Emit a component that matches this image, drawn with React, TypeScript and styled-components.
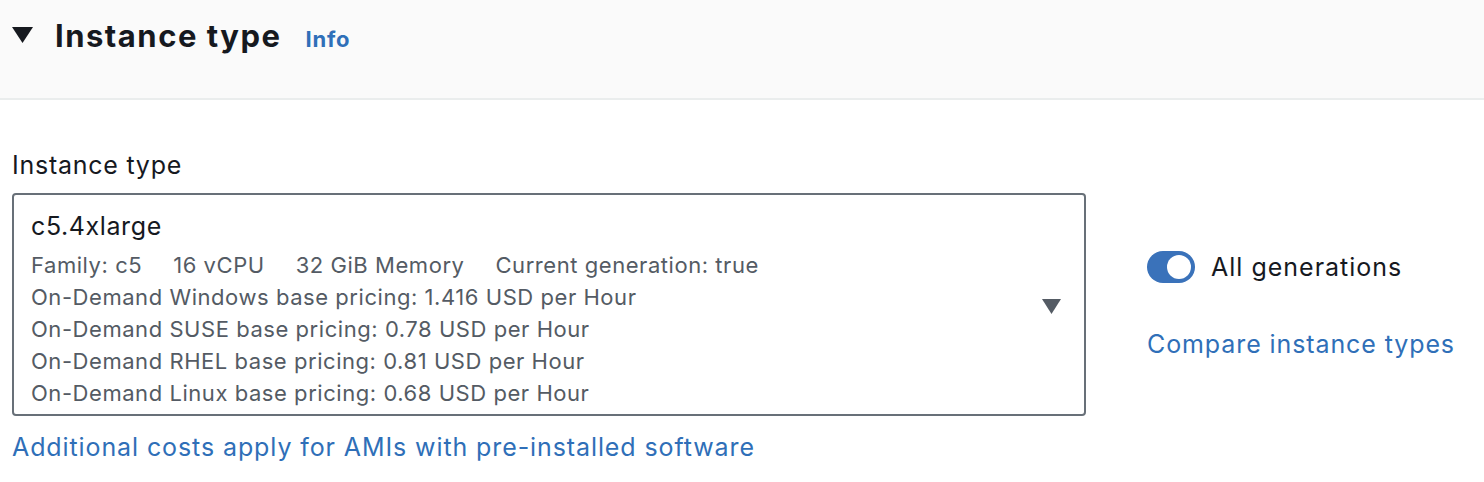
import styled, { createGlobalStyle } from "styled-components";

const GlobalStyle = createGlobalStyle`
  html, body {
    margin: 0;
    padding: 0;
    background: #ffffff;
  }
  body {
    font-family: Inter, "Open Sans", Arial, sans-serif;
    color: #16191f;
  }
`;

const Panel = styled.section`
  width: 1484px;
  height: 482px;
  overflow: hidden;
`;

const Header = styled.header`
  height: 100px;
  box-sizing: border-box;
  background: #fafafa;
  border-bottom: 2px solid #eaeded;
  display: flex;
  align-items: flex-start;
  padding: 13px 12px 0;
  gap: 22px;
`;

const Caret = styled.svg`
  flex: none;
  margin-top: 14px;
`;

const Title = styled.h2`
  margin: 0;
  font-size: 31px;
  font-weight: 700;
  line-height: 46px;
  letter-spacing: 1.5px;
  display: flex;
  align-items: baseline;
  gap: 24px;
`;

const InfoLink = styled.a`
  font-size: 22px;
  font-weight: 700;
  letter-spacing: 0.8px;
  color: #2f6fb8;
  text-decoration: none;
`;

const Body = styled.div`
  padding: 44px 12px 0;
  display: flex;
  align-items: flex-start;
  gap: 61px;
`;

const Field = styled.div`
  display: flex;
  flex-direction: column;
`;

const Label = styled.label`
  font-size: 25px;
  line-height: 38px;
  letter-spacing: 0.75px;
  margin-top: 2px;
  margin-bottom: 9px;
`;

const Select = styled.div`
  width: 1074px;
  height: 223px;
  box-sizing: border-box;
  border: 2px solid #687078;
  border-radius: 4px;
  padding: 12px 17px 0;
  display: flex;
  align-items: center;
`;

const Option = styled.div`
  flex: 1;
  align-self: flex-start;
`;

const OptionName = styled.div`
  font-size: 25px;
  line-height: 38px;
  letter-spacing: 0.6px;
  color: #16191f;
`;

const DetailList = styled.div`
  margin-top: 4px;
`;

const Detail = styled.div`
  display: flex;
  gap: 31px;
  font-size: 22px;
  line-height: 32px;
  letter-spacing: 0.55px;
  color: #545b64;
`;

const SelectArrow = styled.svg`
  flex: none;
  margin-right: 6px;
  margin-top: -8px;
`;

const Link = styled.a`
  font-size: 25px;
  line-height: 36px;
  letter-spacing: 0.9px;
  color: #2f6fb8;
  text-decoration: none;
  margin-top: 13px;
`;

const Side = styled.div`
  padding-top: 107px;
  display: flex;
  flex-direction: column;
  gap: 30px;
`;

const ToggleRow = styled.label`
  display: flex;
  align-items: center;
  gap: 16px;
  font-size: 25px;
  letter-spacing: 1px;
  color: #16191f;
`;

const Track = styled.span<{ $on: boolean }>`
  width: 48px;
  height: 32px;
  border-radius: 16px;
  background: ${(p) => (p.$on ? "#3a72ba" : "#aab7b8")};
  display: flex;
  align-items: center;
  justify-content: ${(p) => (p.$on ? "flex-end" : "flex-start")};
  padding: 0 4px;
  box-sizing: border-box;
`;

const Knob = styled.span`
  width: 24px;
  height: 24px;
  border-radius: 50%;
  background: #ffffff;
`;

const details = [
  "On-Demand Windows base pricing: 1.416 USD per Hour",
  "On-Demand SUSE base pricing: 0.78 USD per Hour",
  "On-Demand RHEL base pricing: 0.81 USD per Hour",
  "On-Demand Linux base pricing: 0.68 USD per Hour",
];

export default function App() {
  return (
    <Panel>
      <GlobalStyle />
      <Header>
        <Caret width="21" height="16" viewBox="0 0 21 16">
          <path d="M0 0 H21 L10.5 16 Z" fill="#16191f" />
        </Caret>
        <Title>
          Instance type
          <InfoLink href="#">Info</InfoLink>
        </Title>
      </Header>
      <Body>
        <Field>
          <Label>Instance type</Label>
          <Select>
            <Option>
              <OptionName>c5.4xlarge</OptionName>
              <DetailList>
                <Detail>
                  <span>Family: c5</span>
                  <span>16 vCPU</span>
                  <span>32 GiB Memory</span>
                  <span>Current generation: true</span>
                </Detail>
                {details.map((d) => (
                  <Detail key={d}>{d}</Detail>
                ))}
              </DetailList>
            </Option>
            <SelectArrow width="19" height="15" viewBox="0 0 19 15">
              <path d="M0 0 H19 L9.5 15 Z" fill="#545b64" />
            </SelectArrow>
          </Select>
          <Link href="#">
            Additional costs apply for AMIs with pre-installed software
          </Link>
        </Field>
        <Side>
          <ToggleRow>
            <Track $on>
              <Knob />
            </Track>
            All generations
          </ToggleRow>
          <Link href="#">Compare instance types</Link>
        </Side>
      </Body>
    </Panel>
  );
}
